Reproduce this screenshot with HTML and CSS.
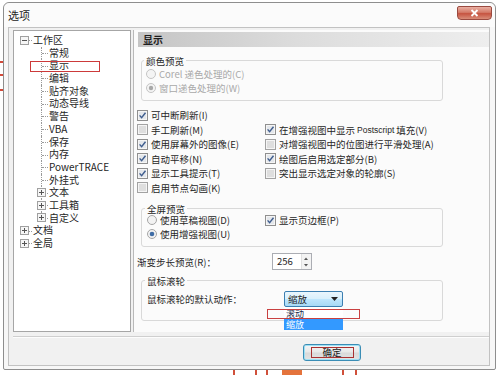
FILE: index.html
```html
<!DOCTYPE html>
<html lang="zh-CN">
<head>
<meta charset="utf-8">
<title>选项</title>
<link rel="stylesheet" href="styles.css">
</head>
<body>
<div class="screen">
  <div class="top-row">
    <div class="edge"><i></i><i></i><i></i></div>
    <div class="window">
      <div class="titlebar">
        <span class="title">选项</span>
        <div class="close"><svg width="11" height="8" viewBox="0 0 11 8"><path d="M2.5 1l6 6M8.5 1l-6 6" stroke="#fff" stroke-width="1.8"/></svg></div>
      </div>
      <div class="client">
        <div class="main">
          <div class="tree">
            <div class="node root"><svg class="exp" width="9" height="9" viewBox="0 0 9 9"><rect x=".5" y=".5" width="8" height="8" fill="#f6f6f6" stroke="#a0a0a0"/><path d="M2 4.5h5" stroke="#555"/></svg>工作区</div>
            <div class="node child">常规</div>
            <div class="node child">显示</div>
            <div class="node child">编辑</div>
            <div class="node child">贴齐对象</div>
            <div class="node child">动态导线</div>
            <div class="node child">警告</div>
            <div class="node child">VBA</div>
            <div class="node child">保存</div>
            <div class="node child">内存</div>
            <div class="node child">PowerTRACE</div>
            <div class="node child">外挂式</div>
            <div class="node child has-exp"><svg class="exp" width="9" height="9" viewBox="0 0 9 9"><rect x=".5" y=".5" width="8" height="8" fill="#f6f6f6" stroke="#a0a0a0"/><path d="M2 4.5h5M4.5 2v5" stroke="#555"/></svg>文本</div>
            <div class="node child has-exp"><svg class="exp" width="9" height="9" viewBox="0 0 9 9"><rect x=".5" y=".5" width="8" height="8" fill="#f6f6f6" stroke="#a0a0a0"/><path d="M2 4.5h5M4.5 2v5" stroke="#555"/></svg>工具箱</div>
            <div class="node child has-exp last"><svg class="exp" width="9" height="9" viewBox="0 0 9 9"><rect x=".5" y=".5" width="8" height="8" fill="#f6f6f6" stroke="#a0a0a0"/><path d="M2 4.5h5M4.5 2v5" stroke="#555"/></svg>自定义</div>
            <div class="node root"><svg class="exp" width="9" height="9" viewBox="0 0 9 9"><rect x=".5" y=".5" width="8" height="8" fill="#f6f6f6" stroke="#a0a0a0"/><path d="M2 4.5h5M4.5 2v5" stroke="#555"/></svg>文档</div>
            <div class="node root"><svg class="exp" width="9" height="9" viewBox="0 0 9 9"><rect x=".5" y=".5" width="8" height="8" fill="#f6f6f6" stroke="#a0a0a0"/><path d="M2 4.5h5M4.5 2v5" stroke="#555"/></svg>全局</div>
            <div class="tree-annot"></div>
          </div>
          <div class="panel">
            <div class="panel-head">显示</div>
            <div class="panel-body">
              <div class="group g1">
                <div class="legend">颜色预览</div>
                <div class="opt disabled"><svg width="10" height="10" viewBox="0 0 10 10"><circle cx="5" cy="5" r="4.5" fill="#f4f4f4" stroke="#c4c4c4"/></svg>Corel 递色处理的(C)</div>
                <div class="opt disabled"><svg width="10" height="10" viewBox="0 0 10 10"><circle cx="5" cy="5" r="4.5" fill="#f4f4f4" stroke="#c4c4c4"/><circle cx="5" cy="5" r="2.2" fill="#a8a8a8"/></svg>窗口递色处理的(W)</div>
              </div>
              <div class="checks">
                <div class="opt"><svg width="11" height="11" viewBox="0 0 11 11"><rect x=".5" y=".5" width="10" height="10" fill="#f5f5f5" stroke="#8f8f8f"/><rect x="2" y="2" width="7" height="7" fill="#e4e7eb"/><path d="M2.6 5.4l2 2.3 3.9-5" fill="none" stroke="#3f5d8e" stroke-width="1.4"/></svg>可中断刷新(I)</div>
                <div></div>
                <div class="opt"><svg width="11" height="11" viewBox="0 0 11 11"><rect x=".5" y=".5" width="10" height="10" fill="#f5f5f5" stroke="#a2a2a2"/><rect x="2" y="2" width="7" height="7" fill="#dedede"/></svg>手工刷新(M)</div>
                <div class="opt"><svg width="11" height="11" viewBox="0 0 11 11"><rect x=".5" y=".5" width="10" height="10" fill="#f5f5f5" stroke="#8f8f8f"/><rect x="2" y="2" width="7" height="7" fill="#e4e7eb"/><path d="M2.6 5.4l2 2.3 3.9-5" fill="none" stroke="#3f5d8e" stroke-width="1.4"/></svg>在增强视图中显示 <span class="latin">Postscript</span> 填充(V)</div>
                <div class="opt"><svg width="11" height="11" viewBox="0 0 11 11"><rect x=".5" y=".5" width="10" height="10" fill="#f5f5f5" stroke="#8f8f8f"/><rect x="2" y="2" width="7" height="7" fill="#e4e7eb"/><path d="M2.6 5.4l2 2.3 3.9-5" fill="none" stroke="#3f5d8e" stroke-width="1.4"/></svg>使用屏幕外的图像(E)</div>
                <div class="opt"><svg width="11" height="11" viewBox="0 0 11 11"><rect x=".5" y=".5" width="10" height="10" fill="#f5f5f5" stroke="#a2a2a2"/><rect x="2" y="2" width="7" height="7" fill="#dedede"/></svg>对增强视图中的位图进行平滑处理(A)</div>
                <div class="opt"><svg width="11" height="11" viewBox="0 0 11 11"><rect x=".5" y=".5" width="10" height="10" fill="#f5f5f5" stroke="#8f8f8f"/><rect x="2" y="2" width="7" height="7" fill="#e4e7eb"/><path d="M2.6 5.4l2 2.3 3.9-5" fill="none" stroke="#3f5d8e" stroke-width="1.4"/></svg>自动平移(N)</div>
                <div class="opt"><svg width="11" height="11" viewBox="0 0 11 11"><rect x=".5" y=".5" width="10" height="10" fill="#f5f5f5" stroke="#8f8f8f"/><rect x="2" y="2" width="7" height="7" fill="#e4e7eb"/><path d="M2.6 5.4l2 2.3 3.9-5" fill="none" stroke="#3f5d8e" stroke-width="1.4"/></svg>绘图后启用选定部分(B)</div>
                <div class="opt"><svg width="11" height="11" viewBox="0 0 11 11"><rect x=".5" y=".5" width="10" height="10" fill="#f5f5f5" stroke="#8f8f8f"/><rect x="2" y="2" width="7" height="7" fill="#e4e7eb"/><path d="M2.6 5.4l2 2.3 3.9-5" fill="none" stroke="#3f5d8e" stroke-width="1.4"/></svg>显示工具提示(T)</div>
                <div class="opt"><svg width="11" height="11" viewBox="0 0 11 11"><rect x=".5" y=".5" width="10" height="10" fill="#f5f5f5" stroke="#a2a2a2"/><rect x="2" y="2" width="7" height="7" fill="#dedede"/></svg>突出显示选定对象的轮廓(S)</div>
                <div class="opt"><svg width="11" height="11" viewBox="0 0 11 11"><rect x=".5" y=".5" width="10" height="10" fill="#f5f5f5" stroke="#a2a2a2"/><rect x="2" y="2" width="7" height="7" fill="#dedede"/></svg>启用节点勾画(K)</div>
                <div></div>
              </div>
              <div class="group g2">
                <div class="legend">全屏预览</div>
                <div class="grid2">
                  <div class="opt"><svg width="10" height="10" viewBox="0 0 10 10"><circle cx="5" cy="5" r="4.5" fill="#f2f2f2" stroke="#a5a5a5"/></svg>使用草稿视图(D)</div>
                  <div class="opt"><svg width="11" height="11" viewBox="0 0 11 11"><rect x=".5" y=".5" width="10" height="10" fill="#f5f5f5" stroke="#8f8f8f"/><rect x="2" y="2" width="7" height="7" fill="#e4e7eb"/><path d="M2.6 5.4l2 2.3 3.9-5" fill="none" stroke="#3f5d8e" stroke-width="1.4"/></svg>显示页边框(P)</div>
                  <div class="opt"><svg width="10" height="10" viewBox="0 0 10 10"><circle cx="5" cy="5" r="4.5" fill="#f2f2f2" stroke="#a5a5a5"/><circle cx="5" cy="5" r="2.3" fill="#3f6da6"/></svg>使用增强视图(U)</div>
                </div>
              </div>
              <div class="grad-row">
                <span class="grad-label">渐变步长预览(R)：</span>
                <div class="spin">
                  <span class="val">256</span>
                  <div class="arrows">
                    <svg width="8" height="7" viewBox="0 0 8 7"><path d="M2 5h4L4 2.5z" fill="#555"/></svg>
                    <svg width="8" height="7" viewBox="0 0 8 7"><path d="M2 2h4L4 4.5z" fill="#555"/></svg>
                  </div>
                </div>
              </div>
              <div class="group g3">
                <div class="legend">鼠标滚轮</div>
                <div class="wheel-row">
                  <span class="wheel-label">鼠标滚轮的默认动作：</span>
                  <div class="combo">
                    <span>缩放</span>
                    <svg class="drop" width="7" height="4" viewBox="0 0 7 4"><path d="M0 0h7L3.5 4z" fill="#222"/></svg>
                    <div class="popup">
                      <div class="item">滚动</div>
                      <div class="item sel">缩放</div>
                    </div>
                    <div class="combo-annot"></div>
                  </div>
                </div>
              </div>
            </div>
          </div>
        </div>
        <div class="sep"></div>
        <div class="footer">
          <div class="btn"><span>确定</span></div>
        </div>
      </div>
    </div>
  </div>
  <div class="strip">
    <i class="m1"></i><i class="m2"></i><i class="m3"></i><i class="m4"></i><i class="m5"></i><i class="m6"></i>
  </div>
</div>
</body>
</html>
```
FILE: styles.css
```css
html, body {
  margin: 0;
  background: #fff;
}
body {
  font-family: "Noto Sans CJK SC", "Noto Sans", sans-serif;
  font-size: 9.5px;
  color: #262626;
}
.screen {
  width: 500px;
  height: 375px;
  overflow: hidden;
}
.top-row {
  display: flex;
  align-items: flex-start;
}
.edge {
  width: 3px;
  flex: none;
}
.edge i {
  display: block;
  height: 2px;
  background: #d24a3a;
}
.edge i:nth-child(1) { margin-top: 61px; }
.edge i:nth-child(2) { margin-top: 11px; }
.edge i:nth-child(3) { margin-top: 13px; }

.window {
  margin-top: 2px;
  width: 493px;
  height: 368px;
  box-sizing: border-box;
  border: 1px solid #8e8e8e;
  border-radius: 6px 6px 2px 2px;
  background: #f7f7f7;
  display: flex;
  flex-direction: column;
}
.titlebar {
  height: 24px;
  flex: none;
  display: flex;
  align-items: flex-start;
  padding-left: 4px;
  background: #fbfbfb;
  border-radius: 6px 6px 0 0;
}
.title {
  font-size: 11px;
  line-height: 12px;
  margin-top: 6px;
  color: #222;
}
.close {
  margin-left: auto;
  margin-right: 3px;
  margin-top: 3px;
  width: 35px;
  height: 14px;
  box-sizing: border-box;
  border: 1px solid #9a4a40;
  border-radius: 2px 2px 4px 4px;
  background: linear-gradient(#eab0a3, #d47a68 45%, #c65441 55%, #d98d79);
  display: flex;
  align-items: center;
  justify-content: center;
}

.client {
  flex: 1;
  margin: 0 5px 3px 4px;
  border: 1px solid #c2c2c2;
  background: #f1f1f1;
  padding: 2px 0 0 4px;
  display: flex;
  flex-direction: column;
}
.main {
  display: flex;
  gap: 2px;
  height: 302px;
  flex: none;
}

/* tree */
.tree {
  width: 118px;
  flex: none;
  box-sizing: border-box;
  border: 1px solid #a6a6a6;
  background: #fff;
  padding-top: 3px;
  position: relative;
  font-size: 10px;
}
.node {
  height: 12.7px;
  line-height: 12.7px;
  display: flex;
  align-items: center;
  white-space: nowrap;
  position: relative;
}
.node.root {
  padding-left: 6px;
}
.node.root .exp {
  margin-right: 4px;
}
.node.root::after {
  content: "";
  position: absolute;
  left: 15px;
  top: 50%;
  width: 3px;
  border-top: 1px dotted #9a9a9a;
}
.node.child {
  padding-left: 35px;
}
.node.child::before {
  content: "";
  position: absolute;
  left: 27px;
  top: 0;
  bottom: 0;
  border-left: 1px dotted #9a9a9a;
}
.node.child.last::before {
  bottom: 50%;
}
.node.child::after {
  content: "";
  position: absolute;
  left: 28px;
  top: 50%;
  width: 6px;
  border-top: 1px dotted #9a9a9a;
}
.node.has-exp {
  padding-left: 23px;
}
.node.has-exp .exp {
  position: relative;
  z-index: 1;
  margin-right: 3px;
}
.exp {
  flex: none;
  display: block;
}
.tree-annot {
  position: absolute;
  left: 16px;
  top: 30px;
  width: 70px;
  height: 11px;
  box-sizing: border-box;
  border: 1px solid #cc3a3a;
}

/* panel */
.panel {
  flex: 1;
  border-left: 1px solid #b9b9b9;
  background: #fbfbfb;
  padding-top: 2px;
}
.panel-head {
  margin-left: 4px;
  height: 15px;
  background: linear-gradient(to right, #c5c5c5, #dcdcdc 45%, #eeeeee);
  font-weight: bold;
  font-size: 10px;
  line-height: 15px;
  padding-left: 5px;
  color: #1e1e1e;
}
.panel-body {
  padding-left: 3px;
}
.group {
  margin-left: 4px;
  width: 302px;
  box-sizing: border-box;
  border: 1px solid #d9d9d9;
  border-radius: 3px;
}
.legend {
  width: fit-content;
  margin-top: -6px;
  margin-left: -2px;
  padding: 0 2px;
  height: 12px;
  line-height: 12px;
  background: #fbfbfb;
}
.opt {
  display: flex;
  align-items: center;
  height: 14px;
  white-space: nowrap;
}
.opt svg {
  flex: none;
  display: block;
  margin-right: 3px;
}
.opt.disabled {
  color: #a9a9a9;
}
.latin {
  font-family: "Liberation Sans", sans-serif;
  font-size: 8.5px;
  margin: 0 2px;
}
.g1 {
  margin-top: 13px;
  padding: 0 0 5px 4px;
}
.checks {
  margin-top: 7px;
  display: grid;
  grid-template-columns: 128px 1fr;
  grid-auto-rows: 14.5px;
}
.checks .opt {
  height: auto;
}
.g2 {
  margin-top: 13px;
  padding: 0 0 5px 5px;
}
.grid2 {
  margin-top: -2px;
  display: grid;
  grid-template-columns: 118px 1fr;
  grid-auto-rows: 14px;
}
.grad-row {
  margin-top: 6px;
  height: 17px;
  display: flex;
  align-items: center;
}
.grad-label {
  width: 135px;
  flex: none;
}
.spin {
  width: 40px;
  height: 17px;
  box-sizing: border-box;
  border: 1px solid #abadb3;
  background: #fff;
  display: flex;
}
.spin .val {
  flex: 1;
  padding-left: 4px;
  line-height: 15px;
}
.spin .arrows {
  width: 9px;
  display: flex;
  flex-direction: column;
  justify-content: center;
  background: #f3f3f3;
  border-left: 1px solid #e0e0e0;
}
.spin .arrows svg {
  display: block;
}
.g3 {
  margin-top: 10px;
  padding: 0 0 13px 5px;
}
.wheel-row {
  margin-top: 4px;
  display: flex;
  align-items: center;
  height: 16px;
}
.wheel-label {
  width: 137px;
  flex: none;
}
.combo {
  position: relative;
  width: 59px;
  height: 16px;
  box-sizing: border-box;
  border: 1px solid #3c7fb1;
  border-radius: 2px;
  background: linear-gradient(#eaf6fd, #d9f0fc 48%, #bee6fd 52%, #a7d9f5);
  display: flex;
  align-items: center;
  padding-left: 3px;
  line-height: 14px;
}
.combo .drop {
  margin-left: auto;
  margin-right: 4px;
  display: block;
}
.popup {
  position: absolute;
  top: 15px;
  left: -1px;
  width: 59px;
  background: #fff;
  padding-top: 1px;
}
.popup .item {
  height: 11px;
  line-height: 11px;
  padding-left: 2px;
  font-size: 9px;
  color: #1a2a4a;
}
.popup .item.sel {
  background: #3399ff;
  color: #fff;
}
.combo-annot {
  position: absolute;
  left: -18px;
  top: 17px;
  width: 93px;
  height: 10px;
  box-sizing: border-box;
  border: 1px solid #c94040;
  z-index: 2;
}

/* footer */
.sep {
  margin-top: 4px;
  border-top: 1px solid #cfcfcf;
  border-bottom: 1px solid #fdfdfd;
  margin-right: 0;
}
.footer {
  display: flex;
  padding: 6px 0 0 290px;
}
.btn {
  width: 58px;
  height: 17px;
  box-sizing: border-box;
  border: 1px solid #3b8db5;
  border-radius: 3px;
  box-shadow: inset 0 0 0 1px #9ee0f5;
  background: linear-gradient(#f5f5f5, #e8e8e8 48%, #d9d9d9 52%, #e3e3e3);
  display: flex;
  align-items: center;
  justify-content: center;
}
.btn span {
  width: 43px;
  height: 11px;
  box-sizing: border-box;
  border: 1px solid #a83232;
  display: flex;
  align-items: center;
  justify-content: center;
  line-height: 9px;
  font-size: 9.5px;
  color: #1a1a1a;
}

/* bottom strip of background window */
.strip {
  height: 5px;
  display: flex;
}
.strip i {
  display: block;
  height: 5px;
  width: 2px;
  background: #d0503a;
}
.strip .m1 { margin-left: 233px; }
.strip .m2 { margin-left: 20px; }
.strip .m3 { margin-left: 9px; }
.strip .m4 { margin-left: 14px; width: 20px; background: #e4733c; }
.strip .m5 { margin-left: 40px; }
.strip .m6 { margin-left: 11px; }
```
